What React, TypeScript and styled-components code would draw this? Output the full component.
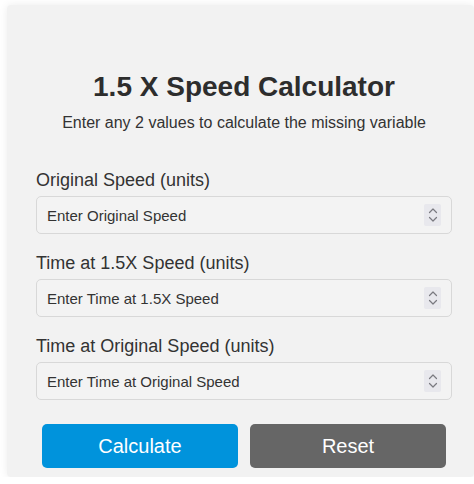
import React from 'react';
import styled, { createGlobalStyle } from 'styled-components';

const GlobalStyle = createGlobalStyle`
  html, body {
    margin: 0;
    padding: 0;
    background: #ffffff;
    overflow: hidden;
  }
  body {
    font-family: "Liberation Sans", Arial, sans-serif;
    color: #333;
  }
`;

const fields = [
  { label: 'Original Speed (units)', placeholder: 'Enter Original Speed' },
  { label: 'Time at 1.5X Speed (units)', placeholder: 'Enter Time at 1.5X Speed' },
  { label: 'Time at Original Speed (units)', placeholder: 'Enter Time at Original Speed' },
];

const Spinner = () => (
  <SpinBox>
    <svg width="10" height="16" viewBox="0 0 10 16" fill="none" stroke="#7a7a80" strokeWidth="1.2" strokeLinecap="round" strokeLinejoin="round">
      <path d="M1.5 5.5 L5 2 L8.5 5.5" />
      <path d="M1.5 10.5 L5 14 L8.5 10.5" />
    </svg>
  </SpinBox>
);

const App = () => {
  return (
    <>
      <GlobalStyle />
      <Card>
        <Title>1.5 X Speed Calculator</Title>
        <Subtitle>Enter any 2 values to calculate the missing variable</Subtitle>
        <Form>
          {fields.map((f) => (
            <Field key={f.label}>
              <Label>{f.label}</Label>
              <InputBox>
                <Input type="text" placeholder={f.placeholder} />
                <Spinner />
              </InputBox>
            </Field>
          ))}
          <Buttons>
            <Button $bg="#0093dc">Calculate</Button>
            <Button $bg="#666666">Reset</Button>
          </Buttons>
        </Form>
      </Card>
    </>
  );
};

const Card = styled.div`
  margin: 5px 0 0 7px;
  width: 467px;
  box-sizing: border-box;
  padding: 66px 22px 9px 29px;
  background: #f2f2f2;
  border-radius: 4px;
  box-shadow: 0 0 8px rgba(0, 0, 0, 0.08);
`;

const Title = styled.h1`
  margin: 0;
  font-size: 28px;
  line-height: 32px;
  font-weight: bold;
  text-align: center;
  color: #2d2d2d;
`;

const Subtitle = styled.p`
  margin: 11px 0 0;
  font-size: 16px;
  line-height: 18px;
  text-align: center;
  color: #333;
`;

const Form = styled.div`
  margin-top: 38px;
  display: flex;
  flex-direction: column;
`;

const Field = styled.div`
  display: flex;
  flex-direction: column;
  gap: 5px;
  margin-bottom: 19px;
`;

const Label = styled.label`
  font-size: 18px;
  line-height: 21px;
  color: #333;
`;

const InputBox = styled.div`
  display: flex;
  align-items: center;
  height: 38px;
  box-sizing: border-box;
  border: 1px solid #d8d8d8;
  border-radius: 5px;
  background: #f3f3f3;
  padding: 0 10px 0 10px;
`;

const Input = styled.input`
  flex: 1;
  min-width: 0;
  border: none;
  outline: none;
  background: transparent;
  padding: 0;
  font-family: "Liberation Sans", Arial, sans-serif;
  font-size: 15px;
  color: #333;
  &::placeholder {
    color: #333;
    opacity: 1;
  }
`;

const SpinBox = styled.div`
  width: 17px;
  height: 22px;
  display: flex;
  align-items: center;
  justify-content: center;
  background: #e8e8ed;
  border-radius: 2px;
`;

const Buttons = styled.div`
  display: flex;
  gap: 12px;
  padding: 5px 6px 0;
`;

const Button = styled.button<{ $bg: string }>`
  flex: 1;
  height: 44px;
  border: none;
  border-radius: 5px;
  background: ${(p) => p.$bg};
  color: #ffffff;
  font-family: "Liberation Sans", Arial, sans-serif;
  font-size: 20px;
  cursor: pointer;
`;

export default App;
